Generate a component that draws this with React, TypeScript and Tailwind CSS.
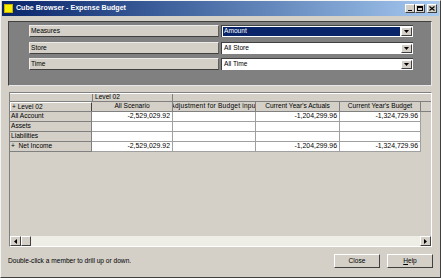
import React from "react";

const raised =
  "bg-[#d4d0c8] border-t border-l border-t-white border-l-white border-b border-r border-b-[#404040] border-r-[#404040]";

function TitleBtn({ children }: { children: React.ReactNode }) {
  return (
    <div className={`${raised} w-[10px] h-[9px] flex items-center justify-center text-black`}>
      {children}
    </div>
  );
}

function Dropdown({ value, selected }: { value: string; selected?: boolean }) {
  return (
    <div className="w-[192px] h-[12px] bg-white border-t border-l border-[#404040] flex items-stretch">
      <div className="flex-1 flex items-center p-[1px] min-w-0">
        <div
          className={`h-full flex-1 flex items-center pl-[1px] ${
            selected ? "bg-[#0a246a] text-white" : "text-black"
          }`}
        >
          {value}
        </div>
      </div>
      <div className={`${raised} w-[11px] flex items-center justify-center my-[1px] mr-[1px]`}>
        <svg width="5" height="3" viewBox="0 0 5 3">
          <path d="M0 0H5L2.5 3Z" fill="#000" />
        </svg>
      </div>
    </div>
  );
}

function Label({ text }: { text: string }) {
  return (
    <div
      className={`w-[190px] h-[12px] bg-[#d4d0c8] border-t border-l border-t-[#ececec] border-l-[#ececec] border-b border-r border-b-[#404040] border-r-[#606060] flex items-center pl-[1px]`}
    >
      {text}
    </div>
  );
}

const cols = [
  { name: "All Scenario", w: "w-[81px]", t: "" },
  { name: "Adjustment for Budget input", w: "w-[83px]", t: "tracking-[0.22px]" },
  { name: "Current Year's Actuals", w: "w-[84px]", t: "" },
  { name: "Current Year's Budget", w: "w-[81px]", t: "" },
];

const rows: { label: string; vals: string[] }[] = [
  { label: "All Account", vals: ["-2,529,029.92", "", "-1,204,299.96", "-1,324,729.96"] },
  { label: "Assets", vals: ["", "", "", ""] },
  { label: "Liabilities", vals: ["", "", "", ""] },
  { label: "+  Net Income", vals: ["-2,529,029.92", "", "-1,204,299.96", "-1,324,729.96"] },
];

export default function App() {
  return (
    <div className="w-[441px] h-[278px] bg-[#d4d0c8] flex flex-col border-r border-b border-r-[#404040] border-b-[#404040] border-l border-t border-l-[#f4f4f4] border-t-[#f4f4f4] font-['Liberation_Sans',Arial,sans-serif] text-[6.6px] leading-none text-black overflow-hidden">
      {/* Title bar */}
      <div className="mx-[1px] h-[15px] bg-gradient-to-r from-[#0a246a] to-[#a6caf0] flex items-center pl-[2px] pr-[2px]">
        <div className="w-[9px] h-[9px] bg-[#f8f000] border border-[#c8b000]" />
        <div className="ml-[3px] text-white font-bold text-[7.1px]">Cube Browser - Expense Budget</div>
        <div className="flex-1" />
        <div className="flex items-center">
          <TitleBtn>
            <div className="w-[4px] h-[1px] bg-black mt-[4px]" />
          </TitleBtn>
          <TitleBtn>
            <div className="w-[6px] h-[5px] border border-black border-t-2" />
          </TitleBtn>
          <div className="w-[2px]" />
          <TitleBtn>
            <svg width="6" height="5" viewBox="0 0 6 5">
              <path d="M0.5 0.5L5.5 4.5M5.5 0.5L0.5 4.5" stroke="#000" strokeWidth="1.2" />
            </svg>
          </TitleBtn>
        </div>
      </div>

      {/* Dimension panel */}
      <div className="mt-[5px] ml-[7px] w-[424px] h-[65px] bg-[#808080] border-t border-l border-t-[#404040] border-l-[#404040] border-b border-r border-b-[#e8e8e8] border-r-[#e8e8e8] pt-[3px] pl-[20px] flex flex-col">
        <div className="flex gap-[2px]">
          <Label text="Measures" />
          <Dropdown value="Amount" selected />
        </div>
        <div className="flex gap-[2px] mt-[5px]">
          <Label text="Store" />
          <Dropdown value="All Store" />
        </div>
        <div className="flex gap-[2px] mt-[4px]">
          <Label text="Time" />
          <Dropdown value="All Time" />
        </div>
      </div>

      {/* Grid */}
      <div className="mt-[6px] ml-[8px] w-[423px] h-[155px] border-t border-l border-t-[#808080] border-l-[#808080] border-b border-r border-b-white border-r-white flex flex-col">
        {/* header row 1 */}
        <div className="flex h-[9px] border-b border-[#808080] bg-[#d4d0c8] border-t border-t-white">
          <div className="w-[82px]" />
          <div className="w-[81px] border-l border-r border-[#808080] flex items-center pl-[2px]">Level 02</div>
          <div className="flex-1" />
        </div>
        {/* header row 2 */}
        <div className="flex h-[10px] border-b border-[#808080]">
          <div className="w-[82px] border-t border-l border-t-white border-l-white border-r border-r-[#404040] bg-[#d4d0c8] flex items-center pl-[1px]">
            + Level 02
          </div>
          {cols.map((c) => (
            <div
              key={c.name}
              className={`${c.w} border-r border-[#808080] bg-[#d4d0c8] flex items-center justify-center overflow-hidden whitespace-nowrap`}
            >
              <span className={`shrink-0 ${c.t}`}>{c.name}</span>
            </div>
          ))}
          <div className="flex-1 bg-[#d4d0c8]" />
        </div>
        {rows.map((r) => (
          <div key={r.label} className="flex h-[10px]">
            <div className="w-[82px] border-b border-r border-[#808080] bg-[#d4d0c8] flex items-center pl-[1px] whitespace-pre">
              {r.label}
            </div>
            {cols.map((c, i) => (
              <div
                key={c.name}
                className={`${c.w} border-b border-r border-[#a0a0a0] bg-white flex items-center justify-end pr-[2px] text-[6.9px]`}
              >
                {r.vals[i]}
              </div>
            ))}
            <div className="flex-1 bg-[#d4d0c8]" />
          </div>
        ))}
        <div className="flex-1 bg-[#d4d0c8]" />
        {/* scrollbar */}
        <div className="h-[10px] flex bg-[#eeede6]">
          <div className={`${raised} w-[11px] flex items-center justify-center`}>
            <svg width="3" height="5" viewBox="0 0 3 5">
              <path d="M3 0V5L0 2.5Z" fill="#000" />
            </svg>
          </div>
          <div className={`${raised} w-[10px]`} />
          <div className="flex-1" />
          <div className={`${raised} w-[11px] flex items-center justify-center`}>
            <svg width="3" height="5" viewBox="0 0 3 5">
              <path d="M0 0V5L3 2.5Z" fill="#000" />
            </svg>
          </div>
        </div>
      </div>

      {/* Bottom bar */}
      <div className="mt-[7px] flex items-center pl-[7px] pr-[7px]">
        <div className="flex-1">Double-click a member to drill up or down.</div>
        <div className="flex gap-[7px]">
          <div className={`${raised} w-[46px] h-[14px] flex items-center justify-center`}>Close</div>
          <div className={`${raised} w-[46px] h-[14px] flex items-center justify-center`}>
            <span>
              <u>H</u>elp
            </span>
          </div>
        </div>
      </div>
    </div>
  );
}
